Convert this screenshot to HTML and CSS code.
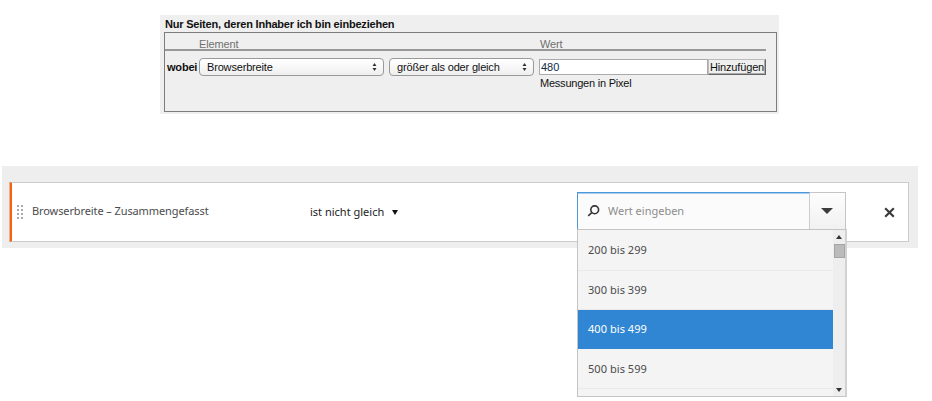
FILE: index.html
```
<!DOCTYPE html>
<html lang="de">
<head>
<meta charset="utf-8">
<title>Segmentregeln</title>
<link rel="stylesheet" href="styles.css">
</head>
<body>
<section class="legacy">
  <h2 class="legacy-title"><span>Nur Seiten, deren Inhaber ich bin einbeziehen</span></h2>
  <div class="legacy-box">
    <div class="legacy-head"><span class="col-element">Element</span><span>Wert</span></div>
    <div class="legacy-row">
      <b class="where">wobei</b>
      <div class="select select-element"><span>Browserbreite</span><svg width="5" height="8" viewBox="0 0 5 8"><path d="M.5 3l2-3 2 3zM.5 5h4l-2 3z"/></svg></div>
      <div class="select select-operator"><span class="operator">größer als oder gleich</span><svg width="5" height="8" viewBox="0 0 5 8"><path d="M.5 3l2-3 2 3zM.5 5h4l-2 3z"/></svg></div>
      <div class="number">480</div>
      <div class="add"><span>Hinzufügen</span></div>
    </div>
    <div class="hint"><span>Messungen in Pixel</span></div>
  </div>
</section>
<section class="builder">
  <div class="rule">
    <svg class="grip" width="6" height="14" viewBox="0 0 6 14"><path d="M0 0h2v2H0zM4 0h2v2H4zM0 4h2v2H0zM4 4h2v2H4zM0 8h2v2H0zM4 8h2v2H4zM0 12h2v2H0zM4 12h2v2H4z"/></svg>
    <span class="dimension">Browserbreite – Zusammengefasst</span>
    <span class="comparison"><span>ist nicht gleich</span><svg width="6" height="5" viewBox="0 0 6 5"><path d="M0 0h6L3 5z"/></svg></span>
    <div class="combo">
      <div class="search">
        <svg width="13" height="13" viewBox="0 0 13 13"><circle cx="7.7" cy="4.8" r="3.9"/><path d="M4.8 7.7 1.2 10.9"/></svg>
        <span>Wert eingeben</span>
      </div>
      <div class="toggle"><svg width="12" height="6" viewBox="0 0 12 6"><path d="M0 0h12L6 6z"/></svg></div>
      <div class="menu">
        <ul class="options">
          <li><span>200 bis 299</span></li>
          <li><span>300 bis 399</span></li>
          <li class="active"><span>400 bis 499</span></li>
          <li><span>500 bis 599</span></li>
        </ul>
        <div class="scrollbar">
          <svg width="6" height="4" viewBox="0 0 6 4"><path d="M0 4 3 0l3 4z"/></svg>
          <div class="thumb"></div>
          <svg class="down" width="6" height="4" viewBox="0 0 6 4"><path d="M0 0h6L3 4z"/></svg>
        </div>
      </div>
    </div>
    <svg class="remove" width="11" height="11" viewBox="0 0 11 11"><path d="m1.2 1.2 8.6 8.6m0-8.6-8.6 8.6"/></svg>
  </div>
</section>
</body>
</html>
```
FILE: styles.css
```
* { box-sizing: border-box; }
body { margin: 0; width: 932px; height: 401px; padding-top: 15px; overflow: hidden; background: #fff; }
svg { display: block; flex: none; }

.legacy { width: 619px; height: 99px; margin-left: 160px; padding: 1px 2px 0 4px; background: #efefef; font: 11px/14px "Liberation Sans", Arial, sans-serif; color: #111; }
.legacy-title { margin: 0; padding: 2px 0 0 1px; height: 16px; font-size: 11px; line-height: 13px; letter-spacing: -.2px; white-space: nowrap; }
.legacy-box { height: 80px; border: 1px solid #7d7d7d; }
.legacy-head { display: flex; width: 601px; height: 18px; padding: 4px 0 0 34px; border-bottom: 2px solid #999; color: #707070; line-height: 14px; letter-spacing: -.15px; }
.col-element { width: 341px; }
.legacy-row { display: flex; align-items: center; height: 19px; margin-top: 6px; width: 601px; }
.where { width: 34px; padding-left: 2px; letter-spacing: -.2px; }
.select { display: flex; align-items: center; justify-content: space-between; height: 18px; padding: 0 6px 0 7px; border: 1px solid #999; border-radius: 4px; background: linear-gradient(#fff, #f8f8f8 50%, #eee); letter-spacing: -.17px; white-space: nowrap; }
.select svg { fill: #333; }
.select-element { width: 185px; }
.select-operator { width: 145px; margin-left: 5px; }
.number { width: 169px; height: 16px; margin-left: 5px; padding-left: 1px; border: 1px solid #aaa; background: #fff; color: #0e2c43; line-height: 14px; }
.add { display: flex; justify-content: center; width: 58px; height: 16px; border: 1px solid; border-color: #bbb #666 #666 #bbb; box-shadow: inset -1px -1px #aaa; letter-spacing: -.15px; line-height: 14px; white-space: nowrap; }
.hint { padding-left: 375px; line-height: 14px; letter-spacing: -.22px; }

.builder { width: 916px; height: 82px; margin: 52px 0 0 2px; padding: 16px 9px 0 8px; background: #eee; font: 11px/16px "Noto Sans", "Open Sans", sans-serif; color: #4b4b4b; white-space: nowrap; }
.rule { display: flex; width: 899px; height: 60px; border: 1px solid #ccc; border-left: 2px solid #f9600f; background: #fff; box-shadow: -1px 0 #e3b294; }
.grip { margin: 22px 0 0 5px; fill: #aaa; }
.dimension { width: 278px; margin: 20px 0 0 9px; letter-spacing: -.1px; }
.comparison { display: flex; width: 267px; margin: 21px 0 0; color: #222; }
.comparison svg { margin: 6px 0 0 8px; fill: #111; }
.combo { position: relative; display: flex; width: 269px; height: 38px; margin-top: 9px; }
.search { display: flex; width: 233px; padding: 10px 0 0 9px; border: 1px solid #ccc; border-top: 1px solid #4a98da; border-left-color: #4a98da; background: #fbfbfb; box-shadow: inset 0 1px #a9cdeb; color: #8c8c8c; }
.search svg { margin: 2px 8px 0 0; fill: none; stroke: #333; stroke-width: 1.6; }
.toggle { display: flex; align-items: center; justify-content: center; width: 36px; padding-right: 1px; border: 1px solid #c5c5c5; border-left: 0; background: linear-gradient(#fdfdfd, #f1f1f1); }
.toggle svg { fill: #3c3c3c; }
.menu { position: absolute; left: 0; top: 37px; display: flex; width: 270px; height: 168px; border: 1px solid #c4c4c4; border-right: 2px solid #d2d2d2; background: #f4f4f4; }
.options { flex: 1; margin: 0; padding: 0; list-style: none; letter-spacing: .05px; }
.options li { height: 39px; padding: 11px 0 0 10px; border-bottom: 1px solid #e9e9e9; }
.options li:first-child { height: 41px; padding-top: 12px; }
.options .active { height: 39px; background: #3086d2; border-bottom-color: #3086d2; color: #fff; }
.options li:last-child { height: 40px; padding-top: 12px; }
.scrollbar { display: flex; flex-direction: column; align-items: center; width: 12px; padding: 5px 0 4px; background: #eee; }
.scrollbar svg { fill: #333; }
.thumb { width: 11px; height: 14px; margin-top: 5px; border: 1px solid #a5a5a5; background: #bbb; }
.down { margin-top: auto; }
.remove { margin: 24px 0 0 38px; fill: none; stroke: #3c3c3c; stroke-width: 2.2; }
```
